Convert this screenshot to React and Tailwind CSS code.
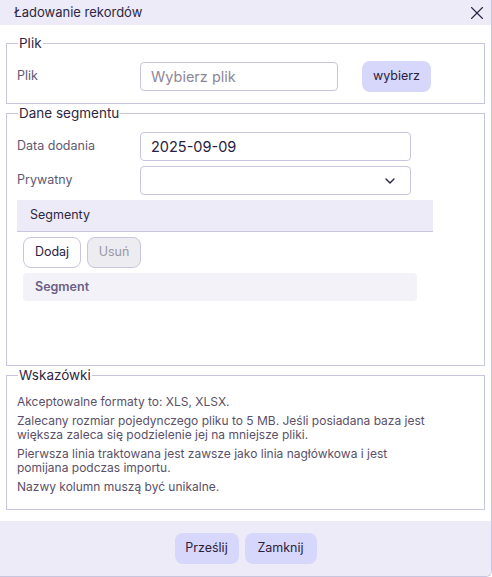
import { X, ChevronDown } from 'lucide-react'

const FONT = { fontFamily: 'Inter, "Noto Sans", sans-serif' }

const Fieldset = ({ title, className = '', children }) => (
  <fieldset className={`mx-[6px] border border-[#c8c6de] ${className}`}>
    <legend className="ml-[11px] px-px text-[13.5px] leading-4 text-[#2f2742]">{title}</legend>
    {children}
  </fieldset>
)

const Row = ({ label, children }) => (
  <div className="flex items-center">
    <span className="w-[133px] pl-[10px] text-[12.5px] text-[#5f5872]">{label}</span>
    {children}
  </div>
)

export default function App() {
  return (
    <div style={FONT} className="w-[492px] h-[577px] bg-white flex flex-col border-r border-b border-[#c8c6de] rounded-br-md overflow-hidden text-[#2f2742]">
      <div className="h-[25px] shrink-0 bg-[#ecebf7] flex items-center justify-between pl-[14px] pr-[3px]">
        <span className="text-[13px]">Ładowanie rekordów</span>
        <X size={22} strokeWidth={1.2} className="text-[#2a2140]" />
      </div>

      <Fieldset title="Plik" className="mt-[10px] pt-[10px] pb-[11px]">
        <Row label="Plik">
          <div className="w-[198px] h-[29px] rounded border border-[#c8c6de] flex items-center px-[10px] text-[14.5px] text-[#8d8799]">
            Wybierz plik
          </div>
          <button className="ml-[24px] w-[69px] h-[31px] rounded-lg bg-[#d7d7fb] text-[12.5px] text-[#2a2140]">wybierz</button>
        </Row>
      </Fieldset>

      <Fieldset title="Dane segmentu" className="mt-px pt-[11px] h-[261px]">
        <div className="flex flex-col gap-[5px]">
          <Row label="Data dodania">
            <div className="w-[271px] h-[29px] rounded border border-[#c8c6de] flex items-center px-[10px] text-[14.5px] text-[#2a2140]">
              2025-09-09
            </div>
          </Row>
          <Row label="Prywatny">
            <div className="w-[271px] h-[29px] rounded border border-[#c8c6de] flex items-center justify-end pr-[12px]">
              <ChevronDown size={16} strokeWidth={2} className="text-[#2a2140]" />
            </div>
          </Row>
          <div className="ml-[10px] w-[416px] h-[32px] bg-[#ecebf7] border-b border-[#c8c6de] flex items-center pl-[13px] text-[12.5px] text-[#2f2742]">
            Segmenty
          </div>
        </div>
        <div className="mt-[5px] ml-[16px] flex gap-[6px]">
          <button className="w-[58px] h-[31px] rounded-lg border border-[#c8c6de] bg-white text-[12.5px] text-[#2a2140]">Dodaj</button>
          <button className="w-[54px] h-[31px] rounded-lg border border-[#c8c6de] bg-[#ececf1] text-[12.5px] text-[#9a96a6]">Usuń</button>
        </div>
        <div className="mt-[5px] ml-[16px] w-[394px] h-[28px] rounded bg-[#f3f2f8] flex items-center pl-[12px] text-[12.5px] font-semibold text-[#6b5f86]">
          Segment
        </div>
      </Fieldset>

      <Fieldset title="Wskazówki" className="mt-px pt-[12px] pb-[15px]">
        <div className="pl-[10px] flex flex-col gap-[5px] text-[12px] leading-[14px] text-[#5a5169]">
          <p>Akceptowalne formaty to: XLS, XLSX.</p>
          <p>Zalecany rozmiar pojedynczego pliku to 5 MB. Jeśli posiadana baza jest<br />większa zaleca się podzielenie jej na mniejsze pliki.</p>
          <p>Pierwsza linia traktowana jest zawsze jako linia nagłówkowa i jest<br />pomijana podczas importu.</p>
          <p>Nazwy kolumn muszą być unikalne.</p>
        </div>
      </Fieldset>

      <div className="mt-[11px] flex-1 bg-[#ecebf7] flex justify-center items-start pt-[12px] gap-[6px]">
        <button className="w-[64px] h-[31px] rounded-lg bg-[#d7d7fb] text-[12.5px] text-[#2a2140]">Prześlij</button>
        <button className="w-[72px] h-[31px] rounded-lg bg-[#d7d7fb] text-[12.5px] text-[#2a2140]">Zamknij</button>
      </div>
    </div>
  )
}
